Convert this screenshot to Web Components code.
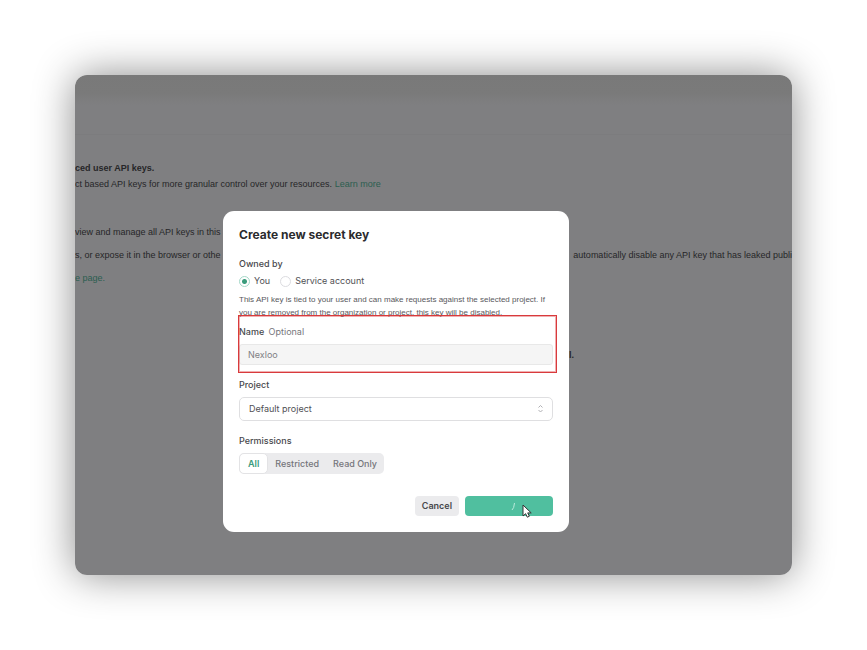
<!DOCTYPE html>
<html lang="en">
<head>
<meta charset="utf-8">
<title>API keys</title>
<style>
body { margin: 0; background: #fff; font: 9px/12px "Liberation Sans", Arial, sans-serif; }
</style>
</head>
<body>
<shot-frame>
  <keys-page slot="page"></keys-page>
  <secret-key-dialog></secret-key-dialog>
</shot-frame>

<template id="shot-frame">
  <style>
    :host { display: block; padding: 75px; }
    .frame { position: relative; overflow: hidden; min-height: 500px; border-radius: 12px; background: linear-gradient(#797979 0, #7a7a7a 18px, #7f7f81 30px); }
    .glow { border-radius: 12px; box-shadow: 0 0 40px rgba(0,0,0,.46); }
    .overlay { position: absolute; inset: 0; padding: 136px 223px 43px 148px; }
  </style>
  <div class="glow"><div class="frame">
    <slot name="page"></slot>
    <div class="overlay"><slot></slot></div>
  </div></div>
</template>

<template id="keys-page">
  <style>
    :host { display: block; color: #262628; white-space: nowrap; padding-top: 59px; }
    p { margin: 0; line-height: 16px; }
    .notice { border-top: 1px solid #7c7c7e; padding: 25px 0 32px; }
    .row { display: flex; justify-content: space-between; margin-bottom: 7px; }
    .empty { display: flex; justify-content: flex-end; padding: 61px 218px 0 0; }
    a { color: #2c5e50; text-decoration: none; }
  </style>
  <section class="notice">
    <p><b>ced user API keys.</b></p>
    <p>ct based API keys for more granular control over your resources. <a href="#more">Learn more</a></p>
  </section>
  <p class="row">view and manage all API keys in this</p>
  <p class="row"><span>s, or expose it in the browser or othe</span><span>automatically disable any API key that has leaked publi</span></p>
  <p><a href="#usage">e page.</a></p>
  <p class="empty"><b>l.</b></p>
</template>

<template id="secret-key-dialog">
  <style>
    :host { display: block; position: relative; background: #fff; border-radius: 11px; padding: 16px; color: #505054; font-family: Inter, "Liberation Sans", sans-serif; }
    h1 { margin: 0 0 15px; font-size: 12px; line-height: 16px; font-weight: 700; color: #2b2b2d; }
    .label { display: block; font-weight: 500; color: #48484c; margin-bottom: 6px; }
    .radios { display: flex; gap: 10px; margin-top: -1px; }
    .help { margin: 6px 0 7px; font: 8px/13px "Liberation Sans", Arial, sans-serif; color: #58585c; }
    .opt { font-weight: 400; color: #77777c; margin-left: 2px; }
    input { display: block; box-sizing: border-box; width: 100%; height: 21px; padding: 0 8px; margin-bottom: 14px; border: 1px solid #e8e8e8; border-radius: 3px; background: #f5f5f5; color: #808084; font: inherit; }
    .actions { display: flex; justify-content: flex-end; gap: 6px; margin-top: 22px; }
    .mark { position: absolute; left: 15px; right: 12px; top: 104px; height: 56px; border: 1px solid #d93a3c; box-shadow: inset 0 0 0 1px rgba(217,58,60,.4); }
    .cursor { position: absolute; right: 37px; bottom: 14px; }
  </style>
  <h1>Create new secret key</h1>
  <span class="label" id="owner">Owned by</span>
  <div class="radios" role="radiogroup" aria-labelledby="owner">
    <owner-option checked>You</owner-option>
    <owner-option>Service account</owner-option>
  </div>
  <p class="help">This API key is tied to your user and can make requests against the selected project. If you are removed from the organization or project, this key will be disabled.</p>
  <label class="label" for="name">Name <span class="opt">Optional</span></label>
  <input id="name" type="text" value="Nexloo">
  <project-select></project-select>
  <permission-tabs></permission-tabs>
  <div class="actions">
    <action-button>Cancel</action-button>
    <action-button primary><svg width="5" height="9" viewBox="0 0 5 9" aria-label="Loading"><path d="M1 8Q3 6.500 3.500 1" fill="none" stroke="#b9eadb"/></svg></action-button>
  </div>
  <div class="mark"></div>
  <svg class="cursor" width="10" height="14" viewBox="0 0 10 14" aria-hidden="true"><path d="M1 1v11l2.600-2.300 1.700 3.500 2.100-1-1.700-3.300h3.500z" fill="#fff" stroke="#333"/></svg>
</template>

<template id="owner-option">
  <style>
    label { display: flex; align-items: center; gap: 4px; }
    input { appearance: none; box-sizing: border-box; width: 11px; height: 11px; margin: 0; border: 1px solid #dcdce0; border-radius: 50%; background: #fff; }
    input:checked { border-color: #a5d8c8; background: radial-gradient(circle, #3b9c7c 2px, #fff 3px); }
  </style>
  <label><input type="radio" name="owner"><slot></slot></label>
</template>

<template id="project-select">
  <style>
    :host { display: block; margin-bottom: 14px; }
    label { display: block; font-weight: 500; color: #48484c; margin-bottom: 6px; }
    .box { display: grid; align-items: center; }
    select, svg { grid-area: 1 / 1; }
    select { appearance: none; box-sizing: border-box; width: 100%; height: 24px; padding: 0 9px; border: 1px solid #dfdfe1; border-radius: 5px; background: #fff; color: #505054; font: inherit; }
    svg { justify-self: end; margin-right: 10px; pointer-events: none; }
  </style>
  <label for="project">Project</label>
  <div class="box">
    <select id="project"><option>Default project</option></select>
    <svg width="5" height="8" viewBox="0 0 5 8"><path d="M.5 2.500l2-2 2 2M.5 5l2 2 2-2" fill="none" stroke="#b0b0b4"/></svg>
  </div>
</template>

<template id="permission-tabs">
  <style>
    :host { display: block; }
    .label { display: block; font-weight: 500; color: #48484c; margin-bottom: 6px; }
    .group { display: inline-flex; height: 21px; border-radius: 5px; background: #ebebed; vertical-align: top; }
    button { border: 0; background: none; padding: 0 7px; font: inherit; font-weight: 500; color: #75757b; }
    button[aria-pressed=true] { padding: 0 8px; border: 1px solid #e3e3e5; border-radius: 5px; background: #fff; color: #3b9c7c; font-weight: 600; }
  </style>
  <span class="label" id="perm">Permissions</span>
  <div class="group" role="group" aria-labelledby="perm">
    <button aria-pressed="true">All</button><button>Restricted</button><button>Read Only</button>
  </div>
</template>

<template id="action-button">
  <style>
    :host { display: block; }
    button { display: block; height: 20px; padding: 0 7px; border: 0; border-radius: 4px; background: #ebebed; color: #48484c; font: inherit; font-weight: 600; }
    :host([primary]) button { width: 88px; padding: 0 0 0 9px; background: #50bf9f; }
    ::slotted(svg) { vertical-align: middle; }
  </style>
  <button type="button"><slot></slot></button>
</template>

<script>
class TemplateElement extends HTMLElement {
  constructor() {
    super();
    this.attachShadow({ mode: 'open' }).append(document.getElementById(this.localName).content.cloneNode(true));
  }
}
class OwnerOption extends TemplateElement {
  connectedCallback() { this.shadowRoot.querySelector('input').checked = this.hasAttribute('checked'); }
}
for (const tag of ['action-button', 'permission-tabs', 'project-select', 'keys-page'])
  customElements.define(tag, class extends TemplateElement {});
customElements.define('owner-option', OwnerOption);
customElements.define('secret-key-dialog', class extends TemplateElement {});
customElements.define('shot-frame', class extends TemplateElement {});
</script>
</body>
</html>
